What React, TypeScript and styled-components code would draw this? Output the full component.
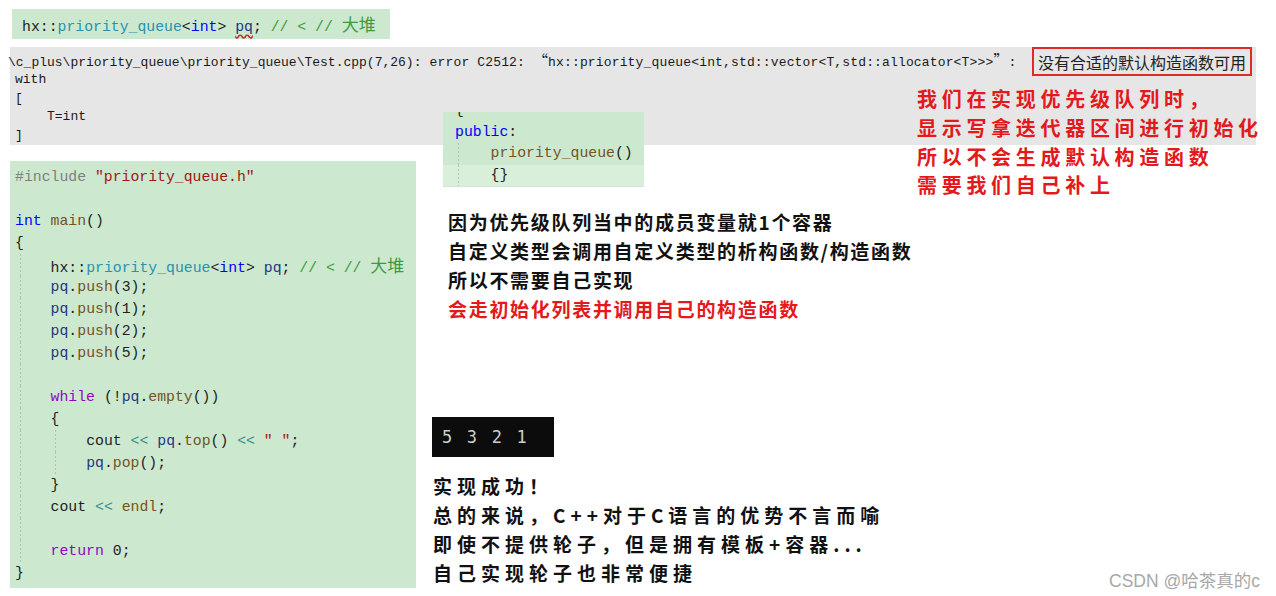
import { Fragment } from 'react'
import styled, { createGlobalStyle } from 'styled-components'

const GlobalStyle = createGlobalStyle`
  html, body {
    margin: 0;
    padding: 0;
    background: #fff;
  }
  body {
    font-family: "Noto Sans CJK SC", "Noto Sans", sans-serif;
  }
`

const CODE_FONT = `"Liberation Mono", "Noto Sans CJK SC", monospace`
const CJK_FONT = `"Noto Sans CJK SC", "Noto Sans", sans-serif`

type Tone = 'plain' | 'type' | 'kw' | 'var' | 'fn' | 'cmt' | 'pre' | 'str' | 'ctrl' | 'op' | 'cjk'

const toneColors: Record<Tone, string> = {
  plain: '#1e1e1e',
  type: '#2b91af',
  kw: '#0000ff',
  var: '#1f377f',
  fn: '#74531f',
  cmt: '#3d9b3d',
  pre: '#808080',
  str: '#a31515',
  ctrl: '#8f08c4',
  op: '#3a8a8a',
  cjk: '#3d9b3d',
}

type Token = [Tone, string]

const Page = styled.div`
  position: relative;
  width: 1276px;
  height: 596px;
  overflow: hidden;
  background: #fff;
`

const Tok = styled.span<{ $tone: Tone; $squiggle?: boolean }>`
  color: ${(p) => toneColors[p.$tone]};
  font-size: ${(p) => (p.$tone === 'cjk' ? '17px' : 'inherit')};
  font-family: ${(p) => (p.$tone === 'cjk' ? CJK_FONT : 'inherit')};
  text-decoration: ${(p) => (p.$squiggle ? 'underline wavy #d12020' : 'none')};
  text-underline-offset: 3px;
`

// dotted indent guides drawn as thin background strips
const guideLayer = (xs: number[]) =>
  xs.length
    ? xs
        .map(
          (x) =>
            `repeating-linear-gradient(to bottom, #aac6ad 0 2px, transparent 2px 4px) ${x}px 0 / 1px 100% no-repeat`,
        )
        .join(', ')
    : 'none'

const CodeLine = styled.div<{ $indent?: number; $band?: boolean; $guides?: number[] }>`
  height: 22px;
  line-height: 22px;
  white-space: pre;
  padding-left: ${(p) => (p.$indent || 0) * 8.9}px;
  background: ${(p) => guideLayer(p.$guides || [])};
  background-color: ${(p) => (p.$band ? '#d9efd9' : 'transparent')};
`

/* ---------- top snippet ---------- */

const TopSnippet = styled.div`
  margin: 9px 0 0 12px;
  width: 378px;
  height: 30px;
  line-height: 30px;
  padding-left: 10px;
  box-sizing: border-box;
  background: #cce8cf;
  white-space: pre;
  font-family: ${CODE_FONT};
  font-size: 14.8px;
`

/* ---------- error output ---------- */

const ErrorPanel = styled.div`
  position: relative;
  margin: 8px 0 0 10px;
  width: 1246px;
  height: 98px;
  background: #e6e6e6;
  font-family: ${CODE_FONT};
  font-size: 13px;
  color: #1a1a1a;
  padding-top: 4.5px;
  box-sizing: border-box;
`

const ErrLine = styled.div<{ $indent?: number; $first?: boolean }>`
  height: ${(p) => (p.$first ? 19.5 : 18.7)}px;
  line-height: ${(p) => (p.$first ? 19.5 : 18.7)}px;
  white-space: pre;
  padding-left: ${(p) => p.$indent ?? 5}px;
`

const Spaced = styled.span`
  letter-spacing: 0.15px;
`

const WideQuote = styled.span`
  font-family: ${CJK_FONT};
  font-size: 15px;
  line-height: 1;
`

// red frame laid over the end of the first error line
const ErrBox = styled.span`
  position: absolute;
  right: 4px;
  top: 0;
  height: 29px;
  box-sizing: border-box;
  display: flex;
  align-items: center;
  padding: 0 4px;
  border: 2px solid #e02a2a;
  font-family: ${CJK_FONT};
  font-size: 16px;
  color: #222;
`

const PublicSnippet = styled.div`
  position: absolute;
  left: 433px;
  top: 65px;
  width: 201px;
  height: 75px;
  overflow: hidden;
  background: #cce8cf;
  font-family: ${CODE_FONT};
  font-size: 14.8px;
  padding-left: 12px;
  box-sizing: border-box;

  ${CodeLine} {
    height: 21.5px;
    line-height: 21.5px;
  }
  ${CodeLine}:first-child {
    margin-top: -12px;
  }
  ${CodeLine}:last-child {
    margin-left: -12px;
    padding-left: ${12 + 4 * 8.9}px;
  }
`

const RedNote = styled.div`
  position: absolute;
  left: 907px;
  top: 38px;
  font-family: ${CJK_FONT};
  font-weight: 700;
  font-size: 20px;
  line-height: 28.8px;
  letter-spacing: 4.7px;
  color: #e3191c;
  white-space: nowrap;
`

/* ---------- lower area ---------- */

const Body = styled.div`
  display: flex;
  margin-top: 16px;
`

const MainCode = styled.div`
  margin-left: 10px;
  width: 406px;
  height: 427px;
  background: #cce8cf;
  font-family: ${CODE_FONT};
  font-size: 14.8px;
  padding: 5px 0 0 5px;
  box-sizing: border-box;
`

const RightColumn = styled.div`
  margin-left: 16px;
  display: flex;
  flex-direction: column;
  align-items: flex-start;
`

const Notes = styled.div<{ $spacing: number }>`
  font-family: ${CJK_FONT};
  font-weight: 700;
  font-size: 19px;
  line-height: 29px;
  letter-spacing: ${(p) => p.$spacing}px;
  color: #111;
  white-space: nowrap;
`

const NoteLine = styled.div<{ $red?: boolean }>`
  color: ${(p) => (p.$red ? '#e3191c' : 'inherit')};
`

const Explain = styled(Notes)`
  margin: 46px 0 0 16px;
`

const Terminal = styled.div`
  margin-top: 94px;
  width: 122px;
  height: 40px;
  box-sizing: border-box;
  padding-left: 10px;
  background: #0c0c0c;
  color: #cccccc;
  font-family: "DejaVu Sans Mono", monospace;
  font-size: 17px;
  letter-spacing: 2.2px;
  line-height: 40px;
  white-space: pre;
`

const Summary = styled(Notes)`
  margin: 14px 0 0 1px;
`

const Watermark = styled.div`
  position: absolute;
  right: 16px;
  top: 567px;
  font-family: "Liberation Sans", "Noto Sans CJK SC", sans-serif;
  font-size: 17.5px;
  color: #a8a8a8;
`

/* ---------- data ---------- */

const pqDecl: Token[] = [
  ['plain', 'hx::'],
  ['type', 'priority_queue'],
  ['plain', '<'],
  ['kw', 'int'],
  ['plain', '> '],
  ['var', 'pq'],
  ['plain', '; '],
  ['cmt', '// < // '],
  ['cjk', '大堆'],
]

const push = (n: number): Token[] => [
  ['var', 'pq'],
  ['plain', '.'],
  ['fn', 'push'],
  ['plain', `(${n});`],
]

const OUTER = [5]
const INNER = [5, 40]

const mainCode: { indent: number; tokens: Token[]; guides?: number[] }[] = [
  { indent: 0, tokens: [['pre', '#include '], ['str', '"priority_queue.h"']] },
  { indent: 0, tokens: [] },
  { indent: 0, tokens: [['kw', 'int'], ['plain', ' '], ['fn', 'main'], ['plain', '()']] },
  { indent: 0, tokens: [['plain', '{']] },
  { indent: 4, tokens: pqDecl, guides: OUTER },
  { indent: 4, tokens: push(3), guides: OUTER },
  { indent: 4, tokens: push(1), guides: OUTER },
  { indent: 4, tokens: push(2), guides: OUTER },
  { indent: 4, tokens: push(5), guides: OUTER },
  { indent: 4, tokens: [], guides: OUTER },
  {
    indent: 4,
    tokens: [['ctrl', 'while'], ['plain', ' (!'], ['var', 'pq'], ['plain', '.'], ['fn', 'empty'], ['plain', '())']],
    guides: OUTER,
  },
  { indent: 4, tokens: [['plain', '{']], guides: OUTER },
  {
    indent: 8,
    tokens: [
      ['plain', 'cout '],
      ['op', '<<'],
      ['plain', ' '],
      ['var', 'pq'],
      ['plain', '.'],
      ['fn', 'top'],
      ['plain', '() '],
      ['op', '<<'],
      ['plain', ' '],
      ['str', '" "'],
      ['plain', ';'],
    ],
    guides: INNER,
  },
  { indent: 8, tokens: [['var', 'pq'], ['plain', '.'], ['fn', 'pop'], ['plain', '();']], guides: INNER },
  { indent: 4, tokens: [['plain', '}']], guides: OUTER },
  {
    indent: 4,
    tokens: [['plain', 'cout '], ['op', '<<'], ['plain', ' '], ['fn', 'endl'], ['plain', ';']],
    guides: OUTER,
  },
  { indent: 4, tokens: [], guides: OUTER },
  { indent: 4, tokens: [['ctrl', 'return'], ['plain', ' 0;']], guides: OUTER },
  { indent: 0, tokens: [['plain', '}']] },
]

const renderTokens = (tokens: Token[]) =>
  tokens.map(([tone, text], i) => (
    <Tok key={i} $tone={tone}>
      {text}
    </Tok>
  ))

export default function App() {
  return (
    <Page>
      <GlobalStyle />

      <TopSnippet>
        <Tok $tone="plain">hx::</Tok>
        <Tok $tone="type">priority_queue</Tok>
        <Tok $tone="plain">{'<'}</Tok>
        <Tok $tone="kw">int</Tok>
        <Tok $tone="plain">{'> '}</Tok>
        <Tok $tone="var" $squiggle>
          pq
        </Tok>
        <Tok $tone="plain">{'; '}</Tok>
        <Tok $tone="cmt">{'// < // '}</Tok>
        <Tok $tone="cjk">大堆</Tok>
      </TopSnippet>

      <ErrorPanel>
        <ErrLine $indent={0} $first>
          <span style={{ marginLeft: -2 }}>
            {'\\c_plus\\priority_queue\\priority_queue\\Test.cpp(7,26)'}
            <Spaced>
              {': error C2512: '}
              <WideQuote>“</WideQuote>
              {'hx::priority_queue<int,std::vector<T,std::allocator<T>>>'}
              <WideQuote>”</WideQuote>
              {': '}
            </Spaced>
          </span>
        </ErrLine>
        <ErrLine>with</ErrLine>
        <ErrLine>[</ErrLine>
        <ErrLine $indent={37}>T=int</ErrLine>
        <ErrLine>]</ErrLine>

        <ErrBox>没有合适的默认构造函数可用</ErrBox>

        <PublicSnippet>
          <CodeLine>
            <Tok $tone="plain">{'{'}</Tok>
          </CodeLine>
          <CodeLine>
            <Tok $tone="kw">public</Tok>
            <Tok $tone="plain">:</Tok>
          </CodeLine>
          <CodeLine $indent={4} $guides={[3]}>
            <Tok $tone="fn">priority_queue</Tok>
            <Tok $tone="plain">()</Tok>
          </CodeLine>
          <CodeLine $band $guides={[15]}>
            <Tok $tone="plain">{'{}'}</Tok>
          </CodeLine>
        </PublicSnippet>

        <RedNote>
          <div>我们在实现优先级队列时，</div>
          <div>显示写拿迭代器区间进行初始化</div>
          <div>所以不会生成默认构造函数</div>
          <div>需要我们自己补上</div>
        </RedNote>
      </ErrorPanel>

      <Body>
        <MainCode>
          {mainCode.map((line, i) => (
            <CodeLine key={i} $indent={line.indent} $guides={line.guides}>
              {line.tokens.length ? renderTokens(line.tokens) : <Fragment>{' '}</Fragment>}
            </CodeLine>
          ))}
        </MainCode>

        <RightColumn>
          <Explain $spacing={1.7}>
            <NoteLine>因为优先级队列当中的成员变量就1个容器</NoteLine>
            <NoteLine>自定义类型会调用自定义类型的析构函数/构造函数</NoteLine>
            <NoteLine>所以不需要自己实现</NoteLine>
            <NoteLine $red>会走初始化列表并调用自己的构造函数</NoteLine>
          </Explain>

          <Terminal>5 3 2 1</Terminal>

          <Summary $spacing={5}>
            <NoteLine>实现成功！</NoteLine>
            <NoteLine>总的来说，C++对于C语言的优势不言而喻</NoteLine>
            <NoteLine>即使不提供轮子，但是拥有模板+容器...</NoteLine>
            <NoteLine>自己实现轮子也非常便捷</NoteLine>
          </Summary>
        </RightColumn>
      </Body>

      <Watermark>CSDN @哈茶真的c</Watermark>
    </Page>
  )
}
